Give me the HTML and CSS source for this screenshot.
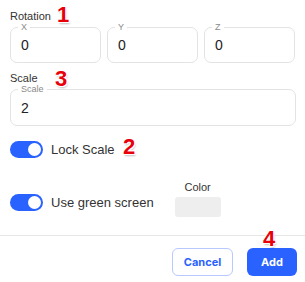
FILE: index.html
```html
<!DOCTYPE html>
<html lang="en">
<head>
    <meta charset="UTF-8">
    <meta name="viewport" content="width=device-width, initial-scale=1.0">
    <title>Add Layer</title>
    <link rel="stylesheet" href="styles.css">
</head>
<body>

    <div class="dialog">
        <div class="content">
            <div class="label">Rotation</div>
            <div class="row-3">
                <div class="field">
                    <span class="legend">X</span>
                    <span class="value">0</span>
                </div>
                <div class="field">
                    <span class="legend">Y</span>
                    <span class="value">0</span>
                </div>
                <div class="field">
                    <span class="legend">Z</span>
                    <span class="value">0</span>
                </div>
            </div>

            <div class="label label-scale">Scale</div>
            <div class="field field-wide">
                <span class="legend">Scale</span>
                <span class="value">2</span>
            </div>

            <div class="toggle-row">
                <span class="switch"><span class="knob"></span></span>
                <span class="toggle-text">Lock Scale</span>
            </div>

            <div class="green-row">
                <div class="toggle-row toggle-green">
                    <span class="switch"><span class="knob"></span></span>
                    <span class="toggle-text">Use green screen</span>
                </div>
                <div class="color-col">
                    <span class="color-label">Color</span>
                    <span class="swatch"></span>
                </div>
            </div>
        </div>

        <div class="actions">
            <button class="btn btn-cancel" type="button">Cancel</button>
            <button class="btn btn-add" type="button">Add</button>
        </div>
    </div>

    <!-- annotation markers -->
    <span class="marker m1">1</span>
    <span class="marker m2">2</span>
    <span class="marker m3">3</span>
    <span class="marker m4">4</span>

</body>
</html>
```

FILE: styles.css
```css
/* Base */
body {
    margin: 0;
    background: #fff;
    font-family: 'Liberation Sans', Arial, sans-serif;
    color: #333;
    position: relative;
    width: 305px;
    height: 282px;
    overflow: hidden;
}

.content {
    padding: 9px 9px 0 10px;
}

.label {
    font-size: 11px;
    line-height: 14px;
    color: #333;
}

.label-scale {
    margin-top: 8px;
}

/* Outlined inputs */
.row-3 {
    display: grid;
    grid-template-columns: 91px 91px 91px;
    column-gap: 6px;
    margin-top: 4px;
}

.field {
    position: relative;
    height: 34px;
    border: 1px solid #e3e3e3;
    border-radius: 7px;
    display: flex;
    align-items: center;
    padding-left: 10px;
}

.field-wide {
    margin-top: 4px;
    height: 35px;
}

.legend {
    position: absolute;
    top: -6px;
    left: 7px;
    padding: 0 3px;
    background: #fff;
    font-size: 9px;
    line-height: 10px;
    color: #8a8a8a;
}

.value {
    font-size: 14px;
    color: #222;
}

/* Toggles */
.toggle-row {
    display: flex;
    align-items: center;
    gap: 8px;
    margin-top: 15px;
}

.switch {
    width: 33px;
    height: 17px;
    border-radius: 9px;
    background: #2962ff;
    display: flex;
    align-items: center;
    justify-content: flex-end;
    padding: 0 2px;
    box-sizing: border-box;
}

.knob {
    width: 13px;
    height: 13px;
    border-radius: 50%;
    background: #fff;
}

.toggle-text {
    font-size: 13px;
    color: #333;
}

.green-row {
    display: flex;
    align-items: flex-end;
    gap: 21px;
    margin-top: 22px;
}

.toggle-green {
    margin-top: 0;
    margin-bottom: 6px;
}

.color-col {
    display: flex;
    flex-direction: column;
    align-items: center;
    gap: 3px;
}

.color-label {
    font-size: 11px;
    line-height: 14px;
    color: #333;
}

.swatch {
    width: 46px;
    height: 20px;
    border-radius: 3px;
    background: #eeeeee;
}

/* Footer buttons */
.actions {
    margin-top: 18px;
    border-top: 1px solid #e6e6e6;
    padding: 12px 8px 0 0;
    display: flex;
    justify-content: flex-end;
    gap: 14px;
}

.btn {
    height: 28px;
    border-radius: 6px;
    font-family: 'Inter', 'Liberation Sans', sans-serif;
    font-size: 11px;
    font-weight: 700;
    cursor: pointer;
}

.btn-cancel {
    width: 61px;
    background: #fff;
    border: 1px solid #b7c9ff;
    color: #2962ff;
}

.btn-add {
    width: 50px;
    background: #2962ff;
    border: none;
    color: #fff;
}

/* Red annotation numbers */
.marker {
    position: absolute;
    font-family: 'Liberation Sans', Arial, sans-serif;
    font-weight: bold;
    font-size: 22px;
    line-height: 22px;
    color: #e8000b;
    text-shadow: 1px 1px 0 #fff, -1px -1px 0 #fff, 1px -1px 0 #fff, -1px 1px 0 #fff, 1px 2px 2px rgba(0, 0, 0, 0.25);
}

.m1 { left: 57px; top: 4px; }
.m2 { left: 123px; top: 136px; }
.m3 { left: 55px; top: 68px; }
.m4 { left: 263px; top: 228px; }
```
